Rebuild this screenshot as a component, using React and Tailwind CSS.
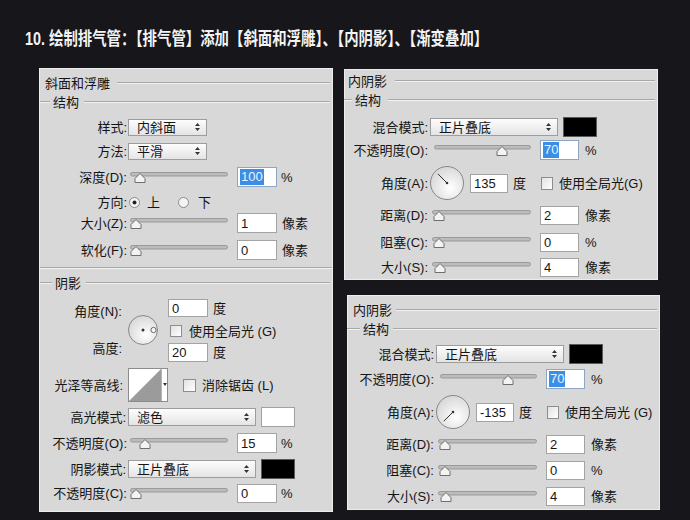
import React from "react";

const UI = "font-['Liberation_Sans','Noto_Sans_CJK_SC',sans-serif]";

function Etch({ className = "" }) {
  return <div className={`h-[2px] border-t border-t-[#a6a6a6] border-b border-b-[#f2f2f2] ${className}`} />;
}

function Head({ title, className = "", lead, text = "", line = "" }) {
  return (
    <div className={`flex items-center h-[16px] ${className}`}>
      {lead && <Etch className={`shrink-0 ${lead}`} />}
      <span className={`whitespace-nowrap ${text}`}>{title}</span>
      <Etch className={`flex-1 ${line}`} />
    </div>
  );
}

function Row({ className = "", children }) {
  return <div className={`flex items-center h-[20px] ${className}`}>{children}</div>;
}

function Label({ w, children }) {
  return <div className={`${w} shrink-0 text-right whitespace-nowrap`}>{children}</div>;
}

function Select({ value, className = "" }) {
  return (
    <div className={`flex items-center justify-between shrink-0 border border-[#9d9d9d] bg-linear-to-b from-[#fdfdfd] to-[#e4e4e4] pl-[8px] pr-[6px] ${className}`}>
      <span className="whitespace-nowrap">{value}</span>
      <svg width="5" height="8" viewBox="0 0 5 8">
        <path d="M2.5 0 L5 3 L0 3 Z M0 5 L5 5 L2.5 8 Z" fill="#333" />
      </svg>
    </div>
  );
}

function Field({ value, sel, className = "" }) {
  return (
    <div className={`flex items-center shrink-0 bg-white border pl-[2px] ${sel ? "border-[#8fa6c2]" : "border-[#a3a3a3]"} ${className}`}>
      {sel ? (
        <span className="bg-[#3b8ee6] text-[#eaf3ff] leading-[16px] px-[1px]">{value}</span>
      ) : (
        <span className="pl-[1px]">{value}</span>
      )}
    </div>
  );
}

function Slider({ w, pos, className = "" }) {
  return (
    <svg width={w} height="14" className={`shrink-0 ${className}`}>
      <rect x="0.5" y="2.5" width={w - 1} height="3.5" rx="1.7" fill="#bcbcbc" stroke="#8e8e8e" strokeWidth="0.8" />
      <path
        d={`M${pos - 5} 12.5 V8.5 L${pos} 3.5 L${pos + 5} 8.5 V12.5 Z`}
        fill="#f3f3f3"
        stroke="#6e6e6e"
      />
    </svg>
  );
}

function Box({ className = "" }) {
  return <div className={`w-[12px] h-[12px] shrink-0 border border-[#8d8d8d] bg-linear-to-br from-[#e2e2e2] to-white ${className}`} />;
}

function Radio({ on, className = "" }) {
  return (
    <svg width="11" height="11" className={`shrink-0 ${className}`}>
      <circle cx="5.5" cy="5.5" r="5" fill="#f4f4f4" stroke="#8a8a8a" />
      {on && <circle cx="5.5" cy="5.5" r="2" fill="#222" />}
    </svg>
  );
}

function Dial({ d, id, children, className = "" }) {
  const r = d / 2;
  return (
    <svg width={d} height={d} className={`shrink-0 ${className}`}>
      <defs>
        <radialGradient id={id} cx="0.6" cy="0.65" r="0.75">
          <stop offset="0" stopColor="#ffffff" />
          <stop offset="1" stopColor="#d2d2d2" />
        </radialGradient>
      </defs>
      <circle cx={r} cy={r} r={r - 0.5} fill={`url(#${id})`} stroke="#878787" />
      {children}
    </svg>
  );
}

function Swatch({ black, className = "" }) {
  return (
    <div className={`shrink-0 w-[34px] h-[20px] border ${black ? "bg-black border-[#5a5a5a]" : "bg-white border-[#a0a0a0]"} ${className}`} />
  );
}

function Bevel() {
  return (
    <div className="w-[294px] h-[444px] ml-[39px] shrink-0 bg-[#d8d8d8] shadow-[inset_0_0_0_1px_#ececec] flex flex-col">
      <Head title="斜面和浮雕" className="mt-[7px] pl-[6px]" line="ml-[7px] mr-[3px]" />
      <Head title="结构" className="mt-[3px]" lead="w-[10px] ml-[1px]" text="ml-[3px]" line="ml-[5px] mr-[3px]" />
      <Row className="mt-[7px]">
        <Label w="w-[88px]">样式:</Label>
        <Select value="内斜面" className="ml-[1px] w-[79px] h-[17px]" />
      </Row>
      <Row className="mt-[4px]">
        <Label w="w-[88px]">方法:</Label>
        <Select value="平滑" className="ml-[1px] w-[79px] h-[17px]" />
      </Row>
      <Row className="mt-[6px]">
        <Label w="w-[88px]">深度(D):</Label>
        <Slider w={98} pos={10} className="ml-[3px]" />
        <Field value="100" sel className="ml-[9px] w-[40px] h-[20px]" />
        <span className="ml-[4px]">%</span>
      </Row>
      <Row className="mt-[5px]">
        <Label w="w-[88px]">方向:</Label>
        <Radio on className="ml-[2px]" />
        <span className="ml-[7px]">上</span>
        <Radio className="ml-[18px]" />
        <span className="ml-[9px]">下</span>
      </Row>
      <Row className="mt-[1px]">
        <Label w="w-[88px]">大小(Z):</Label>
        <Slider w={98} pos={6} className="ml-[3px]" />
        <Field value="1" className="ml-[9px] w-[40px] h-[20px]" />
        <span className="ml-[5px]">像素</span>
      </Row>
      <Row className="mt-[7px]">
        <Label w="w-[88px]">软化(F):</Label>
        <Slider w={98} pos={6} className="ml-[3px]" />
        <Field value="0" className="ml-[9px] w-[40px] h-[20px]" />
        <span className="ml-[5px]">像素</span>
      </Row>
      <Etch className="mt-[7px] mx-[1px]" />
      <Head title="阴影" className="mt-[6px]" lead="w-[12px] ml-[1px]" text="ml-[3px]" line="ml-[5px] mr-[3px]" />

      <div className="flex mt-[6px] h-[67px]">
        <div className="w-[83px] shrink-0 flex flex-col items-end">
          <div className="mt-[8px] h-[14px] leading-[14px] whitespace-nowrap">角度(N):</div>
          <div className="mt-[23px] h-[14px] leading-[14px] whitespace-nowrap">高度:</div>
        </div>
        <Dial d={30} id="g1" className="ml-[6px] mt-[18px]">
          <circle cx="15" cy="15" r="1.5" fill="#333" />
          <circle cx="25.5" cy="15" r="2.6" fill="#fafafa" stroke="#555" strokeWidth="0.9" />
        </Dial>
        <div className="ml-[10px] flex flex-col">
          <div className="flex items-center mt-[2px]">
            <Field value="0" className="w-[40px] h-[18px]" />
            <span className="ml-[5px]">度</span>
          </div>
          <div className="flex items-center mt-[8px] h-[12px]">
            <Box className="ml-[2px]" />
            <span className="ml-[7px] whitespace-nowrap">使用全局光 (G)</span>
          </div>
          <div className="flex items-center mt-[6px]">
            <Field value="20" className="w-[40px] h-[19px]" />
            <span className="ml-[5px]">度</span>
          </div>
        </div>
      </div>

      <div className="flex items-center mt-[4px] h-[34px]">
        <Label w="w-[84px]">光泽等高线:</Label>
        <div className="ml-[5px] w-[40px] h-[34px] shrink-0 border border-[#8c8c8c] bg-white flex">
          <svg width="32" height="32" className="shrink-0">
            <path d="M0 32 L32 0 L32 32 Z" fill="#9b9b9b" />
          </svg>
          <div className="flex-1 border-l border-[#b4b4b4] flex justify-center pt-[14px]">
            <svg width="4" height="3">
              <path d="M0 0 L4 0 L2 3 Z" fill="#333" />
            </svg>
          </div>
        </div>
        <Box className="ml-[15px] h-[13px] w-[13px]" />
        <span className="ml-[6px] whitespace-nowrap">消除锯齿 (L)</span>
      </div>

      <Row className="mt-[5px]">
        <Label w="w-[87px]">高光模式:</Label>
        <Select value="滤色" className="ml-[2px] w-[128px] h-[18px]" />
        <Swatch className="ml-[5px] h-[19px]" />
      </Row>
      <Row className="mt-[6px]">
        <Label w="w-[88px]">不透明度(O):</Label>
        <Slider w={98} pos={15} className="ml-[3px]" />
        <Field value="15" className="ml-[9px] w-[40px] h-[20px]" />
        <span className="ml-[4px]">%</span>
      </Row>
      <Row className="mt-[6px]">
        <Label w="w-[87px]">阴影模式:</Label>
        <Select value="正片叠底" className="ml-[2px] w-[128px] h-[18px]" />
        <Swatch black className="ml-[5px] h-[19px]" />
      </Row>
      <Row className="mt-[4px]">
        <Label w="w-[88px]">不透明度(C):</Label>
        <Slider w={98} pos={6} className="ml-[3px]" />
        <Field value="0" className="ml-[9px] w-[40px] h-[19px]" />
        <span className="ml-[4px]">%</span>
      </Row>
    </div>
  );
}

const V = {
  a: {
    box: "w-[314px] h-[211px] mt-[1px]",
    head: "mt-[4px] pl-[4px]",
    headLine: "ml-[8px] mr-[3px]",
    lead: "w-[8px]",
    sText: "ml-[3px]",
    sLine: "ml-[7px] mr-[3px]",
    rows: "",
    m1: "mt-[9px]",
    m2: "mt-[3px]",
    m3: "mt-[5px]",
    m4: "mt-[4px]",
    m5: "mt-[7px]",
    m6: "mt-[5px]",
    gl: "使用全局光(G)",
  },
  b: {
    box: "w-[313px] h-[215px] mt-[15px] ml-[3px]",
    head: "mt-[7px] pl-[6px]",
    headLine: "ml-[4px] mr-[3px]",
    lead: "w-[13px]",
    sText: "ml-[3px]",
    sLine: "ml-[4px] mr-[3px]",
    rows: "pl-[3px]",
    m1: "mt-[7px]",
    m2: "mt-[5px]",
    m3: "mt-[5px]",
    m4: "mt-[4px]",
    m5: "mt-[6px]",
    m6: "mt-[6px]",
    gl: "使用全局光 (G)",
  },
};

function InnerShadow({ v, angle, down }) {
  const s = V[v];
  const tip = down ? [7.8, 26.2] : [7.8, 7.8];
  return (
    <div className={`shrink-0 bg-[#d8d8d8] shadow-[inset_0_0_0_1px_#ececec] flex flex-col ${s.box}`}>
      <Head title="内阴影" className={s.head} line={s.headLine} />
      <Head title="结构" className="mt-[3px]" lead={s.lead} text={s.sText} line={s.sLine} />
      <div className={`flex flex-col ${s.rows}`}>
        <Row className={s.m1}>
          <Label w="w-[84px]">混合模式:</Label>
          <Select value="正片叠底" className="ml-[2px] w-[128px] h-[18px]" />
          <Swatch black className="ml-[5px]" />
        </Row>
        <Row className={s.m2}>
          <Label w="w-[84px]">不透明度(O):</Label>
          <Slider w={97} pos={68} className="ml-[6px]" />
          <Field value="70" sel className="ml-[9px] w-[39px] h-[20px]" />
          <span className="ml-[6px]">%</span>
        </Row>
        <div className={`flex items-center h-[36px] ${s.m3}`}>
          <Label w="w-[84px]">角度(A):</Label>
          <Dial d={34} id={`d${v}`} className="ml-[2px]">
            <line x1="17" y1="17" x2={tip[0]} y2={tip[1]} stroke="#333" strokeWidth="1" />
            <circle cx="17" cy="17" r="1.3" fill="#333" />
          </Dial>
          <Field value={angle} className="ml-[6px] w-[38px] h-[19px]" />
          <span className="ml-[5px]">度</span>
          <Box className="ml-[15px] h-[13px]" />
          <span className="ml-[6px] whitespace-nowrap">{s.gl}</span>
        </div>
        <Row className={s.m4}>
          <Label w="w-[84px]">距离(D):</Label>
          <Slider w={99} pos={7} className="ml-[4px]" />
          <Field value="2" className="ml-[9px] w-[39px] h-[19px]" />
          <span className="ml-[6px]">像素</span>
        </Row>
        <Row className={s.m5}>
          <Label w="w-[84px]">阻塞(C):</Label>
          <Slider w={99} pos={7} className="ml-[4px]" />
          <Field value="0" className="ml-[9px] w-[39px] h-[19px]" />
          <span className="ml-[6px]">%</span>
        </Row>
        <Row className={s.m6}>
          <Label w="w-[84px]">大小(S):</Label>
          <Slider w={99} pos={8} className="ml-[4px]" />
          <Field value="4" className="ml-[9px] w-[39px] h-[19px]" />
          <span className="ml-[6px]">像素</span>
        </Row>
      </div>
    </div>
  );
}

export default function App() {
  return (
    <div className={`w-[690px] h-[520px] overflow-hidden bg-[#16161b] text-[13px] leading-none text-[#151515] ${UI}`}>
      <div className="h-[68px] pl-[25px] pt-[29px]">
        <div className="inline-block origin-left scale-x-[0.8] whitespace-nowrap text-[18px] leading-[20px] font-bold text-[#f3f3f3] font-['Liberation_Sans','Noto_Sans_CJK_SC',sans-serif]">
          10. 绘制排气管：【排气管】添加【斜面和浮雕】、【内阴影】、【渐变叠加】
        </div>
      </div>
      <div className="flex">
        <Bevel />
        <div className="ml-[11px] flex flex-col">
          <InnerShadow v="a" angle="135" />
          <InnerShadow v="b" angle="-135" down />
        </div>
      </div>
    </div>
  );
}
